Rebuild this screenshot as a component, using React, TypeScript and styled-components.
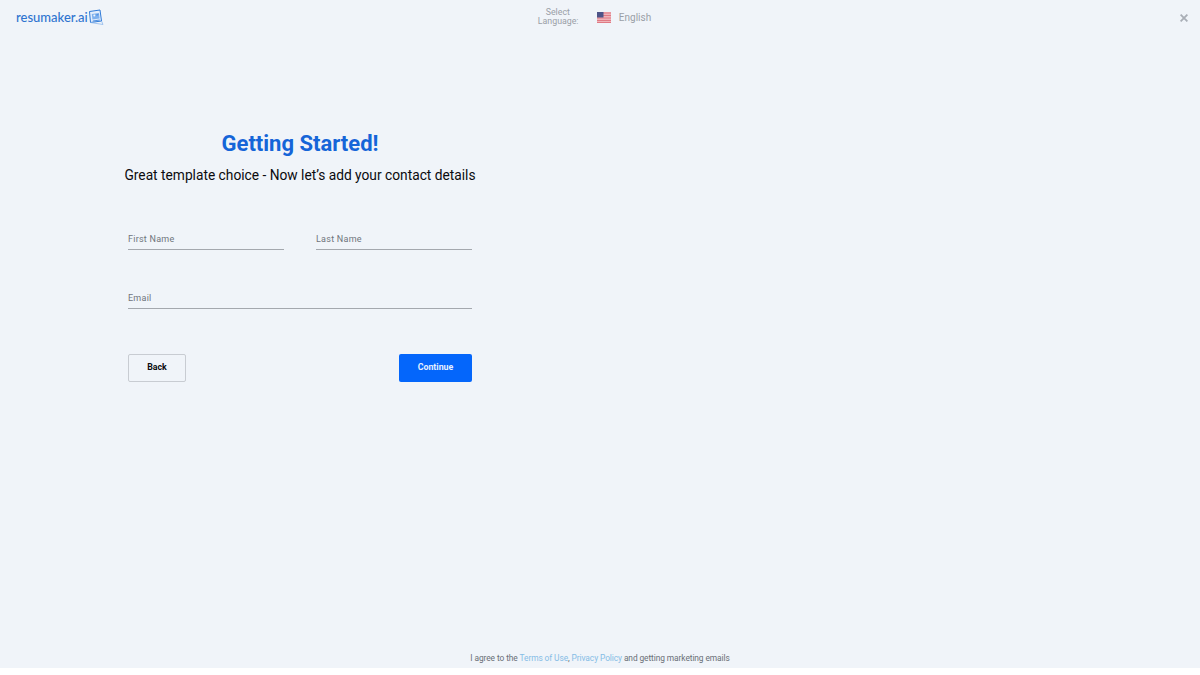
import styled, { createGlobalStyle } from 'styled-components';

const GlobalStyle = createGlobalStyle`
  html, body {
    margin: 0;
    padding: 0;
    background: #ffffff;
    font-family: Roboto, "Liberation Sans", sans-serif;
  }
`;

function LogoIcon() {
  return (
    <svg width="16" height="17" viewBox="0 0 16 17" fill="none">
      <path d="M1.5 2.5 L12 1 L13.5 12 L2.5 13.5 Z" fill="#e3edfb" stroke="#2f7ad8" strokeWidth="1" />
      <path d="M3.8 5 L11 4 L11.6 9.5 L4.4 10.5 Z" fill="#7fb1ee" />
      <circle cx="6.3" cy="6.6" r="1" fill="#f0f4f9" />
      <path d="M8.3 6 L10.4 5.7 M4.8 12 L11.8 11" stroke="#2f7ad8" strokeWidth="0.8" />
      <path d="M2.5 13.5 L15 15.5 L13.5 12" stroke="#8db7ec" strokeWidth="0.8" />
    </svg>
  );
}

function UsFlag() {
  return (
    <svg width="14" height="11" viewBox="0 0 14 11">
      <rect width="14" height="11" fill="#efb4ba" />
      <path d="M0 1h14M0 3.5h14M0 6h14M0 8.5h14M0 10.5h14" stroke="#e07a84" strokeWidth="1" />
      <rect width="6.5" height="5.5" fill="#4d5488" />
    </svg>
  );
}

function App() {
  return (
    <>
      <GlobalStyle />
      <Page>
        <Header>
          <Logo>
            <LogoText>resumaker.ai</LogoText>
            <LogoIcon />
          </Logo>
          <LanguagePicker>
            <LanguageLabel>Select<br />Language:</LanguageLabel>
            <UsFlag />
            <LanguageName>English</LanguageName>
          </LanguagePicker>
          <CloseButton aria-label="Close">
            <svg width="8" height="8" viewBox="0 0 8 8">
              <path d="M0.6 0.6 L7.4 7.4 M7.4 0.6 L0.6 7.4" stroke="#a9aeb6" strokeWidth="1.8" />
            </svg>
          </CloseButton>
        </Header>
        <Main>
          <FormColumn>
            <Title>Getting Started!</Title>
            <Subtitle>Great template choice - Now let’s add your contact details</Subtitle>
            <NameRow>
              <Field>First Name</Field>
              <Field>Last Name</Field>
            </NameRow>
            <EmailRow>
              <Field>Email</Field>
            </EmailRow>
            <Actions>
              <BackButton>Back</BackButton>
              <ContinueButton>Continue</ContinueButton>
            </Actions>
          </FormColumn>
        </Main>
        <Footer>
          I agree to the <FooterLink>Terms of Use</FooterLink>, <FooterLink>Privacy Policy</FooterLink> and getting marketing emails
        </Footer>
      </Page>
    </>
  );
}

const Page = styled.div`
  width: 1200px;
  height: 668px;
  background: #f0f4f9;
  display: flex;
  flex-direction: column;
  overflow: hidden;
`;
const Header = styled.header`
  display: grid;
  grid-template-columns: 1fr auto 1fr;
  align-items: center;
  height: 34px;
  padding: 0 12px 0 16px;
`;
const Logo = styled.div`
  display: flex;
  align-items: center;
`;
const LogoText = styled.span`
  font-family: Lato, sans-serif;
  font-size: 13px;
  font-weight: 500;
  color: #2f74d0;
`;
const LanguagePicker = styled.div`
  display: flex;
  align-items: center;
  gap: 19px;
  margin-right: 15px;
`;
const LanguageLabel = styled.div`
  font-size: 8.8px;
  line-height: 9px;
  color: #9a9fa7;
  text-align: center;
  width: 40px;
`;
const LanguageName = styled.span`
  font-size: 10px;
  color: #9a9fa7;
  margin-left: -11px;
`;
const CloseButton = styled.button`
  justify-self: end;
  display: flex;
  padding: 0;
  margin-top: 1px;
  border: none;
  background: none;
`;
const Main = styled.main`
  flex: 1;
  padding-left: 128px;
`;
const FormColumn = styled.div`
  width: 344px;
  padding-top: 95px;
`;
const Title = styled.h1`
  margin: 0;
  font-size: 22px;
  line-height: 30px;
  font-weight: 700;
  color: #1565d8;
  text-align: center;
`;
const Subtitle = styled.p`
  margin: 6px -10px 0;
  font-size: 13.75px;
  line-height: 20px;
  color: #0b0b0f;
  text-align: center;
  white-space: nowrap;
`;
const NameRow = styled.div`
  display: grid;
  grid-template-columns: 1fr 1fr;
  gap: 32px;
  margin-top: 46px;
`;
const EmailRow = styled.div`
  margin-top: 40px;
`;
const Field = styled.div`
  height: 18px;
  font-size: 9px;
  line-height: 16px;
  letter-spacing: 0.25px;
  color: #6f747c;
  border-bottom: 1px solid #a4a8ae;
`;
const Actions = styled.div`
  display: flex;
  justify-content: space-between;
  margin-top: 45px;
`;
const BackButton = styled.button`
  width: 58px;
  height: 28px;
  padding: 0 0 2px;
  border: 1px solid #c8ccd2;
  border-radius: 2px;
  background: transparent;
  font-family: inherit;
  font-size: 8.8px;
  font-weight: 700;
  color: #0b0b0f;
`;
const ContinueButton = styled.button`
  width: 73px;
  height: 28px;
  padding: 0 0 2px;
  border: none;
  border-radius: 2px;
  background: #0466fb;
  font-family: inherit;
  font-size: 8.8px;
  font-weight: 700;
  color: #e6f0ff;
`;
const Footer = styled.footer`
  height: 20px;
  font-size: 8.4px;
  line-height: 20px;
  letter-spacing: -0.09px;
  color: #6a6f77;
  text-align: center;
`;
const FooterLink = styled.span`
  color: #86bde6;
`;

export default App;
